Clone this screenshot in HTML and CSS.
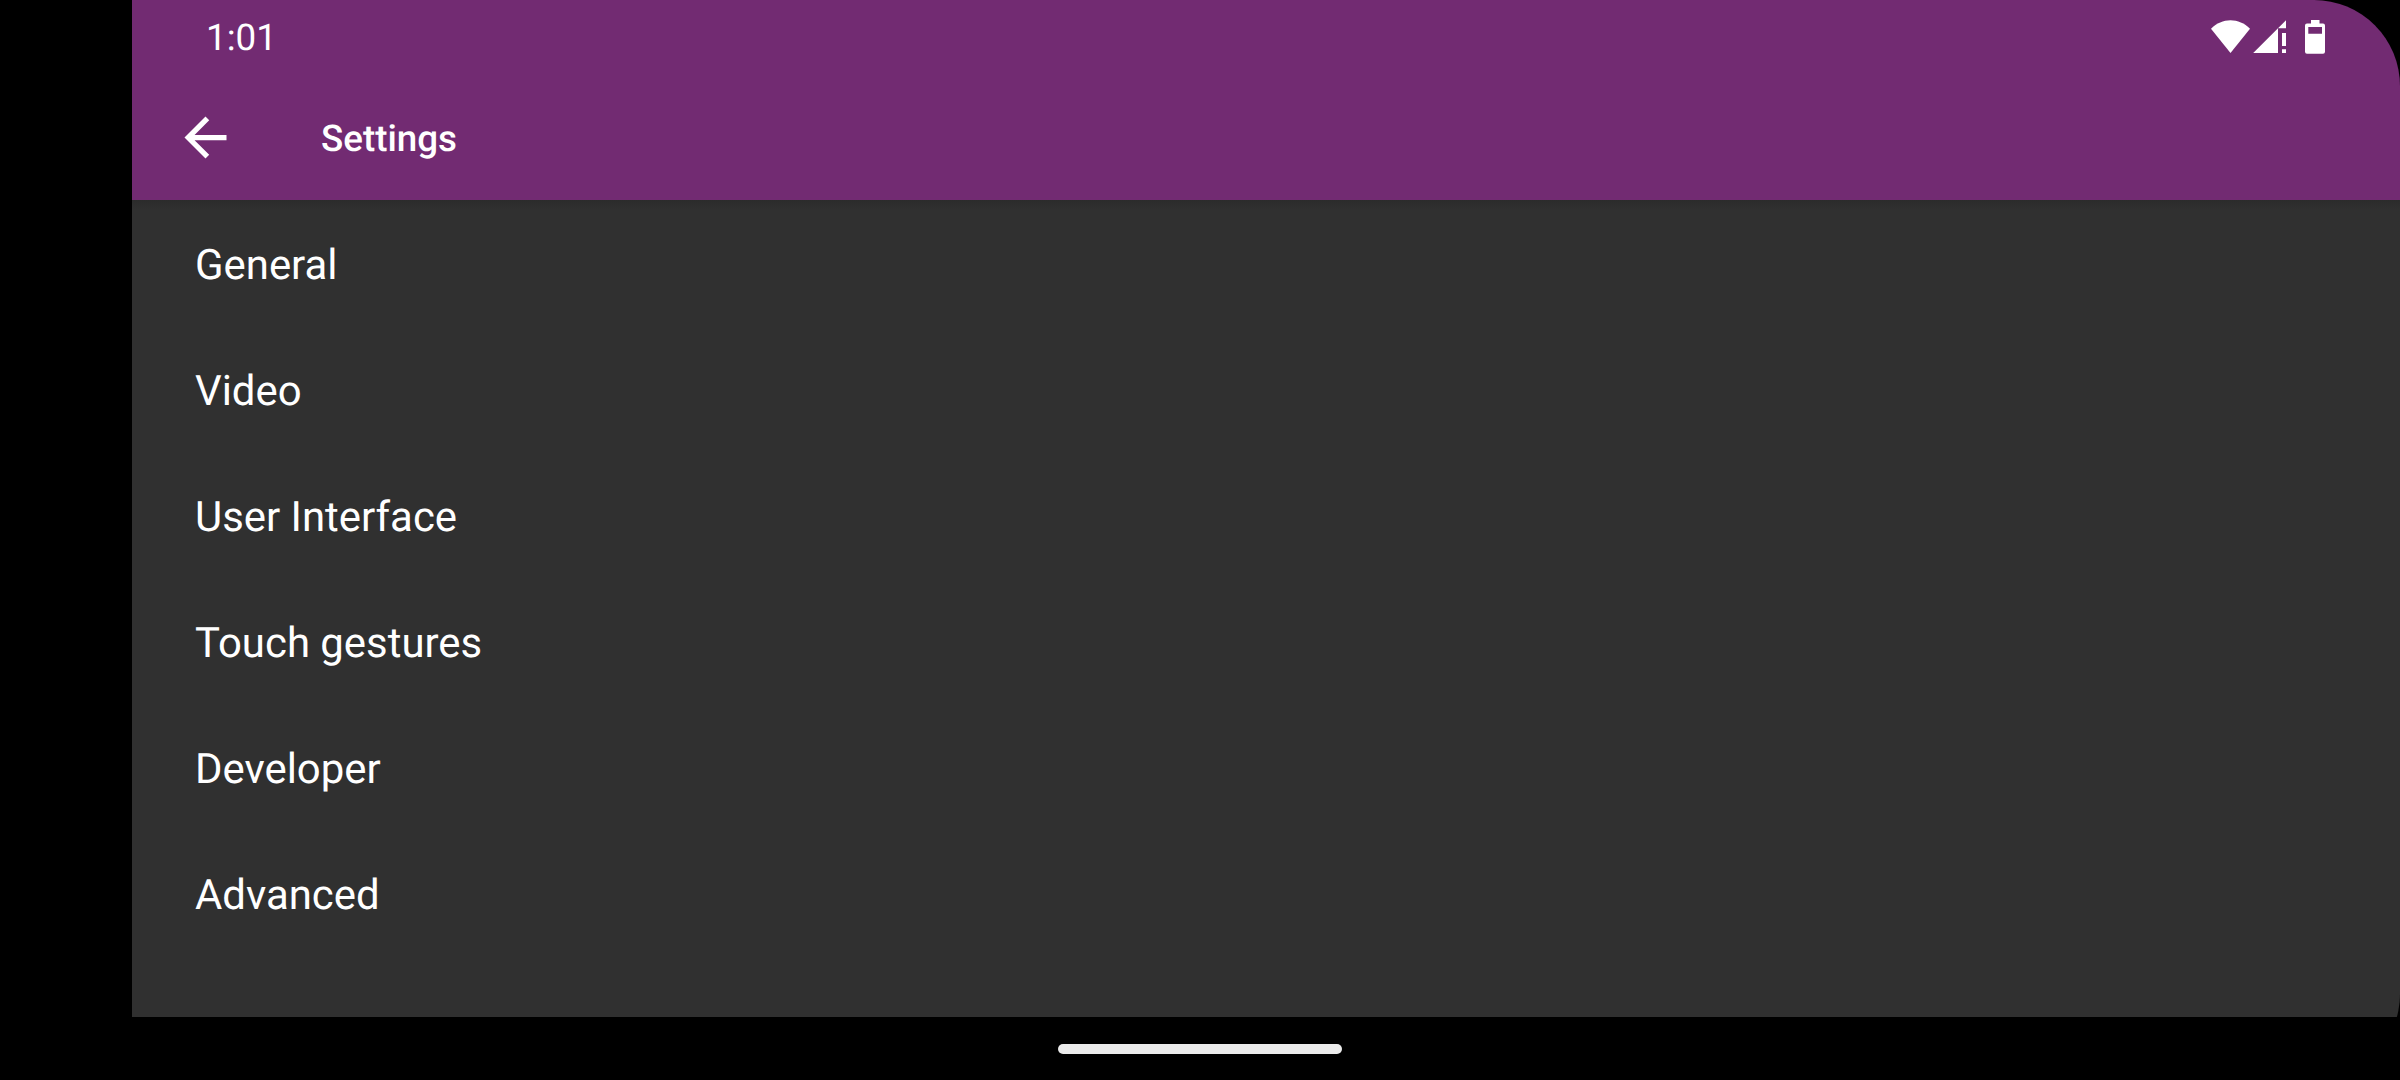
FILE: index.html
```html
<!DOCTYPE html>
<html lang="en">
<head>
<meta charset="utf-8">
<title>Settings</title>
<link rel="stylesheet" href="styles.css">
</head>
<body>
<div class="screen">
  <header class="top">
    <div class="status">
      <span class="clock">1:01</span>
      <svg class="status-icons" width="114" height="34" viewBox="0 0 114 34" fill="#fff">
        <path d="M0 8.8C11 -2.7 28 -2.7 39 8.8L19.5 33Z"/>
        <path d="M42.2 33L75 .2V8.3H67V33ZM71 13H75V26H71ZM71 29.3H75V33H71Z"/>
        <path fill-rule="evenodd" d="M100 0H108.500V3.500H112Q114 3.500 114 5.500V31.800Q114 33.800 112 33.800H96Q94 33.800 94 31.800V5.500Q94 3.500 96 3.500H100ZM97.300 7V13.800H111V7Z"/>
      </svg>
    </div>
    <div class="toolbar">
      <svg class="back" width="63" height="63" viewBox="0 0 24 24" fill="#fff"><path d="M20 11H7.830l5.590-5.590L12 4l-8 8 8 8 1.410-1.410L7.830 13H20v-2z"/></svg>
      <h1 class="title">Settings</h1>
    </div>
  </header>
  <main class="list">
    <div class="item">General</div>
    <div class="item">Video</div>
    <div class="item">User Interface</div>
    <div class="item">Touch gestures</div>
    <div class="item">Developer</div>
    <div class="item">Advanced</div>
  </main>
  <footer class="nav"><div class="handle"></div></footer>
</div>
</body>
</html>
```
FILE: styles.css
```css
body { margin: 0; background: #000; color: #fff; font-family: Roboto, sans-serif; text-rendering: geometricPrecision; }
.screen { width: 2400px; height: 1080px; overflow: hidden; display: flex; flex-direction: column; border-radius: 0 86px 86px 0; }
.top { height: 200px; margin-left: 132px; background: #722b72; }
.status { height: 74px; padding: 0 75px 0 74px; display: flex; align-items: flex-start; justify-content: space-between; }
.clock { font-size: 36.75px; line-height: 76px; }
.status-icons { margin-top: 20px; }
.toolbar { height: 125px; padding: 1px 0 0 42px; display: flex; align-items: center; }
.title { margin: 1px 0 0 84px; font-size: 36.75px; font-weight: 500; }
.list { height: 817px; margin-left: 132px; background: linear-gradient(#2b2b2b, #303030 10px); }
.item { height: 126px; line-height: 132px; padding-left: 63px; font-size: 41.9px; }
.nav { flex: 1; padding-top: 1px; display: flex; align-items: center; justify-content: center; }
.handle { width: 284px; height: 10px; border-radius: 5px; background: #ebebeb; }
```
